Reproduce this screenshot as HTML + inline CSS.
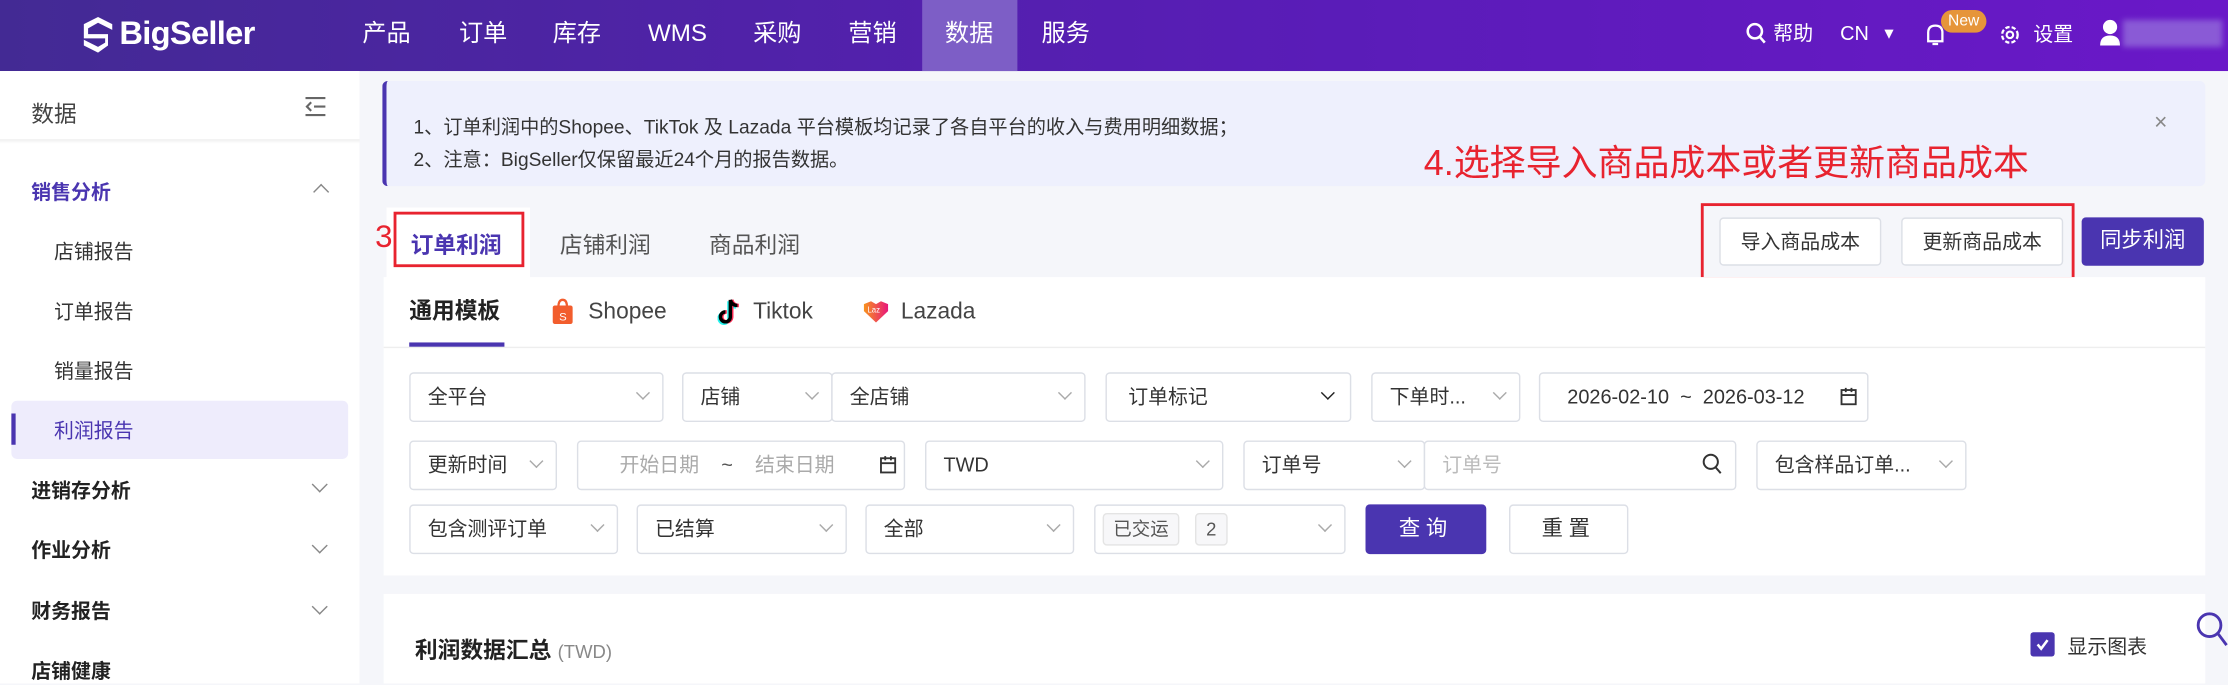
<!DOCTYPE html>
<html><head><meta charset="utf-8"><style>
*{box-sizing:border-box;margin:0;padding:0}
html,body{width:2228px;height:683px;overflow:hidden;background:#f5f6fa}
body{font-family:"Liberation Sans","Noto Sans CJK SC",sans-serif;color:#333}
#w{position:absolute;left:0;top:0;width:1568px;height:481px;transform:scale(1.42092);transform-origin:0 0;background:#f5f6fa}
.a{position:absolute;white-space:nowrap}
.top{left:0;top:0;width:1568px;height:50px;background:linear-gradient(90deg,#432a94,#5a1cb8 60%,#6a18c8)}
.nav{color:#fff;font-size:17px;top:0;line-height:48px;height:50px}
.side{left:0;top:50px;width:253px;height:431px;background:#fff}
.si{font-size:14px;color:#333}
.sb{font-size:14px;font-weight:bold;color:#222}
.chev{width:8px;height:8px;border-right:1.3px solid #888;border-bottom:1.3px solid #888;transform:rotate(45deg)}
.box{position:absolute;border:1px solid #dcdfe6;border-radius:3px;background:#fff;height:35px;font-size:14px;color:#333;padding-left:12px;line-height:33px;white-space:nowrap}
.box .v{position:absolute;right:10px;top:10px;width:7px;height:7px;border-right:1px solid #aaa;border-bottom:1px solid #aaa;transform:rotate(45deg)}
.btn{position:absolute;border:1px solid #dcdfe6;border-radius:3px;background:#fff;font-size:14px;text-align:center;color:#333}
.pl{font-size:16px;color:#444;line-height:20px;top:210px}
</style></head><body><div id="w">
<div class="a top"></div>
<svg class="a" style="left:57px;top:11px" width="24" height="27" viewBox="0 0 24 27"><path d="M12 1 L22 6 L22 10 L12 5 L5 9 L5 13 L19 13 L19 21 L12 26 L2 21 L2 17 L12 22 L17 19 L17 16 L2 16 L2 6 Z" fill="#fff"/></svg>
<div class="a" style="left:84px;top:10px;color:#fff;font-size:23px;font-weight:bold;letter-spacing:-0.5px;line-height:27px">BigSeller</div>
<div class="a" style="left:649px;top:0;width:67px;height:50px;background:#7d5ec6"></div>
<div class="a nav" style="left:255px">产品</div>
<div class="a nav" style="left:323px">订单</div>
<div class="a nav" style="left:389px">库存</div>
<div class="a nav" style="left:456px">WMS</div>
<div class="a nav" style="left:530px">采购</div>
<div class="a nav" style="left:597px">营销</div>
<div class="a nav" style="left:665px">数据</div>
<div class="a nav" style="left:733px">服务</div>
<svg class="a" style="left:1228px;top:15px" width="16" height="18" viewBox="0 0 16 18"><circle cx="7" cy="7" r="5" fill="none" stroke="#fff" stroke-width="1.8"/><path d="M10.5 11 L14 15" stroke="#fff" stroke-width="1.8"/></svg>
<div class="a" style="left:1248px;top:14px;color:#fff;font-size:14px;line-height:18px">帮助</div>
<div class="a" style="left:1295px;top:14px;color:#fff;font-size:14px;line-height:18px">CN</div>
<div class="a" style="left:1324px;top:18px;color:#fff;font-size:11px;line-height:12px">▼</div>
<svg class="a" style="left:1354px;top:15px" width="16" height="20" viewBox="0 0 16 20"><path d="M3 14 L3 8 Q3 3 8 3 Q13 3 13 8 L13 14 Z M6 16 L10 16" fill="none" stroke="#fff" stroke-width="1.6"/></svg>
<div class="a" style="left:1366px;top:7px;width:32px;height:16px;background:#e6953a;border-radius:8px;color:#fff;font-size:11px;text-align:center;line-height:16px">New</div>
<svg class="a" style="left:1406px;top:16px" width="17" height="17" viewBox="0 0 17 17"><circle cx="8.5" cy="8.5" r="5.5" fill="none" stroke="#fff" stroke-width="1.6" stroke-dasharray="3 1.5"/><circle cx="8.5" cy="8.5" r="2.3" fill="none" stroke="#fff" stroke-width="1.5"/></svg>
<div class="a" style="left:1431px;top:15px;color:#fff;font-size:14px;line-height:18px">设置</div>
<svg class="a" style="left:1477px;top:13px" width="16" height="20" viewBox="0 0 16 20"><circle cx="8" cy="6" r="5" fill="#fff"/><path d="M1 19 Q1 12 8 12 Q15 12 15 19 Z" fill="#fff"/></svg>
<div class="a" style="left:1494px;top:14px;width:70px;height:19px;background:#8a5ad6;filter:blur(2px)"></div>

<div class="a side"></div>
<div class="a" style="left:0;top:98px;width:253px;height:3px;background:linear-gradient(#eee,#fff)"></div>
<div class="a" style="left:22px;top:67px;font-size:16px;color:#444">数据</div>
<svg class="a" style="left:213px;top:67px" width="18" height="16" viewBox="0 0 18 16"><path d="M2 2H16M8 8H16M2 14H16M6 5L3 8L6 11" fill="none" stroke="#666" stroke-width="1.5"/></svg>
<div class="a sb" style="left:22px;top:125px;color:#4a35b0">销售分析</div>
<div class="a chev" style="left:222px;top:131px;transform:rotate(-135deg)"></div>
<div class="a si" style="left:38px;top:167px">店铺报告</div>
<div class="a si" style="left:38px;top:209px">订单报告</div>
<div class="a si" style="left:38px;top:251px">销量报告</div>
<div class="a" style="left:8px;top:282px;width:237px;height:41px;background:#eeecfc;border-radius:4px"></div>
<div class="a" style="left:8px;top:291px;width:3px;height:22px;background:#4a35b0"></div>
<div class="a si" style="left:38px;top:293px;color:#4a35b0">利润报告</div>
<div class="a sb" style="left:22px;top:335px">进销存分析</div><div class="a chev" style="left:221px;top:337px"></div>
<div class="a sb" style="left:22px;top:377px">作业分析</div><div class="a chev" style="left:221px;top:380px"></div>
<div class="a sb" style="left:22px;top:420px">财务报告</div><div class="a chev" style="left:221px;top:423px"></div>
<div class="a sb" style="left:22px;top:462px">店铺健康</div>

<div class="a" style="left:269px;top:57px;width:1283px;height:74px;background:#eef0fd;border-left:3px solid #4a35b0;border-radius:4px"></div>
<div class="a" style="left:291px;top:78px;font-size:13.5px;color:#333">1、订单利润中的Shopee、TikTok 及 Lazada 平台模板均记录了各自平台的收入与费用明细数据；</div>
<div class="a" style="left:291px;top:101px;font-size:13.5px;color:#333">2、注意：BigSeller仅保留最近24个月的报告数据。</div>
<div class="a" style="left:1516px;top:78px;font-size:16px;color:#888">×</div>
<div class="a" style="left:1002px;top:100px;font-size:25.3px;color:#e8232f;line-height:30px">4.选择导入商品成本或者更新商品成本</div>

<div class="a" style="left:272px;top:146px;width:101px;height:50px;background:#fff"></div>
<div class="a" style="left:264px;top:154px;font-size:22px;color:#e8232f">3</div>
<div class="a" style="left:277px;top:149px;width:92px;height:39px;border:2px solid #e8232f"></div>
<div class="a" style="left:289px;top:159px;font-size:16px;font-weight:bold;color:#4a35b0">订单利润</div>
<div class="a" style="left:394px;top:159px;font-size:16px;color:#555">店铺利润</div>
<div class="a" style="left:499px;top:159px;font-size:16px;color:#555">商品利润</div>
<div class="a" style="left:1197px;top:143px;width:263px;height:54px;border:2px solid #e8232f"></div>
<div class="btn" style="left:1210px;top:153px;width:114px;height:34px;line-height:32px">导入商品成本</div>
<div class="btn" style="left:1338px;top:153px;width:114px;height:34px;line-height:32px">更新商品成本</div>
<div class="btn" style="left:1465px;top:153px;width:86px;height:34px;line-height:34px;background:#4a35b0;border:none;color:#fff;font-size:15px">同步利润</div>

<div class="a" style="left:270px;top:195px;width:1282px;height:210px;background:#fff"></div>
<div class="a" style="left:288px;top:210px;font-size:16px;font-weight:bold;color:#222;line-height:20px">通用模板</div>
<div class="a" style="left:270px;top:244px;width:1282px;height:1px;background:#eee"></div>
<div class="a" style="left:288px;top:241px;width:67px;height:3px;background:#4a35b0"></div>
<svg class="a" style="left:388px;top:210px" width="16" height="19" viewBox="0 0 16 19"><rect x="1" y="5" width="14" height="13" rx="1.5" fill="#f25d2d"/><path d="M5 6 Q5 1 8 1 Q11 1 11 6" fill="none" stroke="#f25d2d" stroke-width="1.6"/><text x="5.5" y="15.5" font-size="8" fill="#fff" font-family="Liberation Sans">S</text></svg>
<div class="a pl" style="left:414px">Shopee</div>
<svg class="a" style="left:505px;top:209px" width="16" height="20" viewBox="0 0 16 20"><path d="M9 2 V14 A3.5 3.5 0 1 1 5.5 10.5 M9 2 Q10 6 14 6" fill="none" stroke="#25f4ee" stroke-width="2.4" transform="translate(-1 1)"/><path d="M9 2 V14 A3.5 3.5 0 1 1 5.5 10.5 M9 2 Q10 6 14 6" fill="none" stroke="#fe2c55" stroke-width="2.4" transform="translate(1 0)"/><path d="M9 2 V14 A3.5 3.5 0 1 1 5.5 10.5 M9 2 Q10 6 14 6" fill="none" stroke="#000" stroke-width="2.4"/></svg>
<div class="a pl" style="left:530px">Tiktok</div>
<svg class="a" style="left:607px;top:211px" width="19" height="17" viewBox="0 0 19 17"><defs><linearGradient id="lg" x1="0" x2="1"><stop offset="0" stop-color="#f7931e"/><stop offset="1" stop-color="#e8177a"/></linearGradient></defs><path d="M1 3 L6 1 L9.5 3 L13 1 L18 3 L18 8 L9.5 16 L1 8 Z" fill="url(#lg)"/><text x="3.5" y="9" font-size="5.5" fill="#fff" font-family="Liberation Sans">Laz</text></svg>
<div class="a pl" style="left:634px">Lazada</div>

<div class="box" style="left:288px;top:262px;width:179px">全平台<i class="v"></i></div>
<div class="box" style="left:480px;top:262px;width:106px">店铺<i class="v"></i></div>
<div class="box" style="left:585px;top:262px;width:179px">全店铺<i class="v"></i></div>
<div class="box" style="left:778px;top:262px;width:173px;padding-left:15px">订单标记<i class="v" style="border-color:#222;right:12px"></i></div>
<div class="box" style="left:965px;top:262px;width:105px">下单时...<i class="v"></i></div>
<div class="box" style="left:1083px;top:262px;width:232px;padding-left:19px">2026-02-10 &nbsp;~&nbsp; 2026-03-12</div>
<svg class="a" style="left:1295px;top:272px" width="12" height="14" viewBox="0 0 12 14"><rect x="1" y="2.5" width="10" height="10" fill="none" stroke="#333" stroke-width="1.3"/><path d="M1 6H11M4 1V4M8 1V4" stroke="#333" stroke-width="1.3"/></svg>

<div class="box" style="left:288px;top:310px;width:104px">更新时间<i class="v"></i></div>
<div class="box" style="left:406px;top:310px;width:231px;padding-left:29px;color:#aaa">开始日期 &nbsp; &nbsp;<span style="color:#555">~</span> &nbsp; &nbsp;结束日期</div>
<svg class="a" style="left:619px;top:320px" width="12" height="14" viewBox="0 0 12 14"><rect x="1" y="2.5" width="10" height="10" fill="none" stroke="#333" stroke-width="1.3"/><path d="M1 6H11M4 1V4M8 1V4" stroke="#333" stroke-width="1.3"/></svg>
<div class="box" style="left:651px;top:310px;width:210px">TWD<i class="v"></i></div>
<div class="box" style="left:875px;top:310px;width:128px">订单号<i class="v"></i></div>
<div class="box" style="left:1002px;top:310px;width:220px;color:#bbb">订单号</div>
<svg class="a" style="left:1197px;top:318px" width="16" height="18" viewBox="0 0 16 18"><circle cx="7" cy="7" r="5" fill="none" stroke="#333" stroke-width="1.4"/><path d="M10.5 11 L14 15" stroke="#333" stroke-width="1.4"/></svg>
<div class="box" style="left:1236px;top:310px;width:148px">包含样品订单...<i class="v"></i></div>

<div class="box" style="left:288px;top:355px;width:147px">包含测评订单<i class="v"></i></div>
<div class="box" style="left:448px;top:355px;width:148px">已结算<i class="v"></i></div>
<div class="box" style="left:609px;top:355px;width:147px">全部<i class="v"></i></div>
<div class="box" style="left:770px;top:355px;width:177px"><i class="v"></i></div>
<div class="a" style="left:776px;top:361px;width:54px;height:23px;border:1px solid #e4e4e4;border-radius:3px;background:#f7f7f9;font-size:13px;color:#555;text-align:center;line-height:21px">已交运</div>
<div class="a" style="left:841px;top:361px;width:23px;height:23px;border:1px solid #e4e4e4;border-radius:3px;background:#f7f7f9;font-size:13px;color:#555;text-align:center;line-height:21px">2</div>
<div class="btn" style="left:961px;top:355px;width:85px;height:35px;line-height:35px;background:#4a35b0;border:none;color:#fff;font-size:15px;letter-spacing:4px">查询</div>
<div class="btn" style="left:1062px;top:355px;width:84px;height:35px;line-height:33px;font-size:15px;letter-spacing:4px">重置</div>

<div class="a" style="left:270px;top:418px;width:1282px;height:63px;background:#fff"></div>
<div class="a" style="left:292px;top:444px;font-size:16px;font-weight:bold;color:#222">利润数据汇总 <span style="font-weight:normal;font-size:13px;color:#888">(TWD)</span></div>
<div class="a" style="left:1429px;top:445px;width:17px;height:17px;background:#4a35b0;border-radius:2px"></div>
<svg class="a" style="left:1431px;top:447px" width="13" height="13" viewBox="0 0 13 13"><path d="M3 6.5 L5.5 9.5 L10 3.5" fill="none" stroke="#fff" stroke-width="1.8"/></svg>
<div class="a" style="left:1455px;top:445px;font-size:14px;color:#333">显示图表</div>
<svg class="a" style="left:1543px;top:428px" width="25" height="30" viewBox="0 0 25 30"><circle cx="12" cy="12" r="8" fill="none" stroke="#4a35b0" stroke-width="2"/><path d="M18 18 L24 26" stroke="#4a35b0" stroke-width="2"/></svg>
</div></body></html>
